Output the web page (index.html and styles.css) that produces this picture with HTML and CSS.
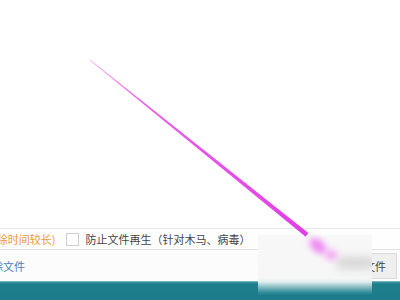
FILE: index.html
```html
<!DOCTYPE html>
<html>
<head>
<meta charset="utf-8">
<link rel="stylesheet" href="styles.css">
</head>
<body>
<div class="page">
  <div class="canvas"></div>
  <div class="options">
    <span class="note">(擦除时间较长)</span>
    <span class="check"></span>
    <span class="label">防止文件再生（针对木马、病毒）</span>
  </div>
  <div class="actions">
    <span class="link">删除文件</span>
    <span class="button">粉碎文件</span>
  </div>
  <div class="taskbar"></div>

  <div class="smudge">
    <span class="smudge-gray"></span>
  </div>
  <svg class="pen" width="400" height="300" viewBox="0 0 400 300">
    <defs>
      <filter id="soft" x="-50%" y="-50%" width="200%" height="200%">
        <feGaussianBlur stdDeviation="3"/>
      </filter>
      <linearGradient id="ink" x1="90" y1="60" x2="307" y2="235" gradientUnits="userSpaceOnUse">
        <stop offset="0" stop-color="#f0a0f0"/>
        <stop offset="0.25" stop-color="#e860e8"/>
        <stop offset="1" stop-color="#e23ee6"/>
      </linearGradient>
    </defs>
    <polygon points="89.8,60.3 90.2,59.7 308.4,232.9 305.6,236.7" fill="url(#ink)"/>
    <ellipse cx="318" cy="246" rx="10" ry="6" transform="rotate(40 318 246)" fill="#ee88f2" filter="url(#soft)"/>
    <ellipse cx="331" cy="255" rx="6" ry="5" fill="#f2a2f4" filter="url(#soft)"/>
  </svg>
</div>
</body>
</html>
```

FILE: styles.css
```css
html, body {
  margin: 0;
  padding: 0;
  background: #ffffff;
}
body {
  font-family: "Noto Sans CJK SC", "Noto Sans", sans-serif;
}
.page {
  position: relative;
  width: 400px;
  height: 300px;
  overflow: hidden;
  display: flex;
  flex-direction: column;
}
.canvas {
  height: 228px;
  background: #ffffff;
}
.options {
  height: 20px;
  border-top: 1px solid #e6e6e6;
  border-bottom: 1px solid #e2e2e2;
  display: flex;
  align-items: center;
  font-size: 11px;
  line-height: 20px;
  white-space: nowrap;
  background: #fefefe;
}
.note {
  color: #ee9a3c;
  margin-left: -18px;
}
.check {
  width: 11px;
  height: 11px;
  border: 1px solid #cfcfcf;
  background: #fff;
  margin-left: 11px;
  flex: none;
}
.label {
  color: #444;
  margin-left: 6px;
}
.actions {
  height: 31px;
  display: flex;
  align-items: center;
  justify-content: space-between;
  background: #fcfcfc;
  font-size: 11px;
  white-space: nowrap;
}
.link {
  color: #4a7cc0;
  margin-left: -19px;
}
.button {
  height: 24px;
  line-height: 24px;
  padding: 0 10px 0 12px;
  margin-right: 3px;
  background: #efefef;
  border: 1px solid #dadada;
  color: #444;
}
.taskbar {
  flex: 1;
  background: linear-gradient(to bottom, #a9d3d8 0, #3f96a2 1px, #1f7f8d 3px, #1c7b8a 100%);
}
.smudge {
  position: absolute;
  left: 258px;
  top: 235px;
  width: 114px;
  height: 60px;
  background: linear-gradient(to bottom, #f8f8f8 0, #f6f6f6 72%, #e2eeef 78%, #8fc0c7 86%, #2f8c99 96%, #21808e 100%);
  overflow: hidden;
}
.smudge-gray {
  position: absolute;
  left: 78px;
  top: 22px;
  width: 40px;
  height: 12px;
  border-radius: 6px;
  background: #d6d6d6;
  filter: blur(4px);
}
.pen {
  position: absolute;
  left: 0;
  top: 0;
}
```
